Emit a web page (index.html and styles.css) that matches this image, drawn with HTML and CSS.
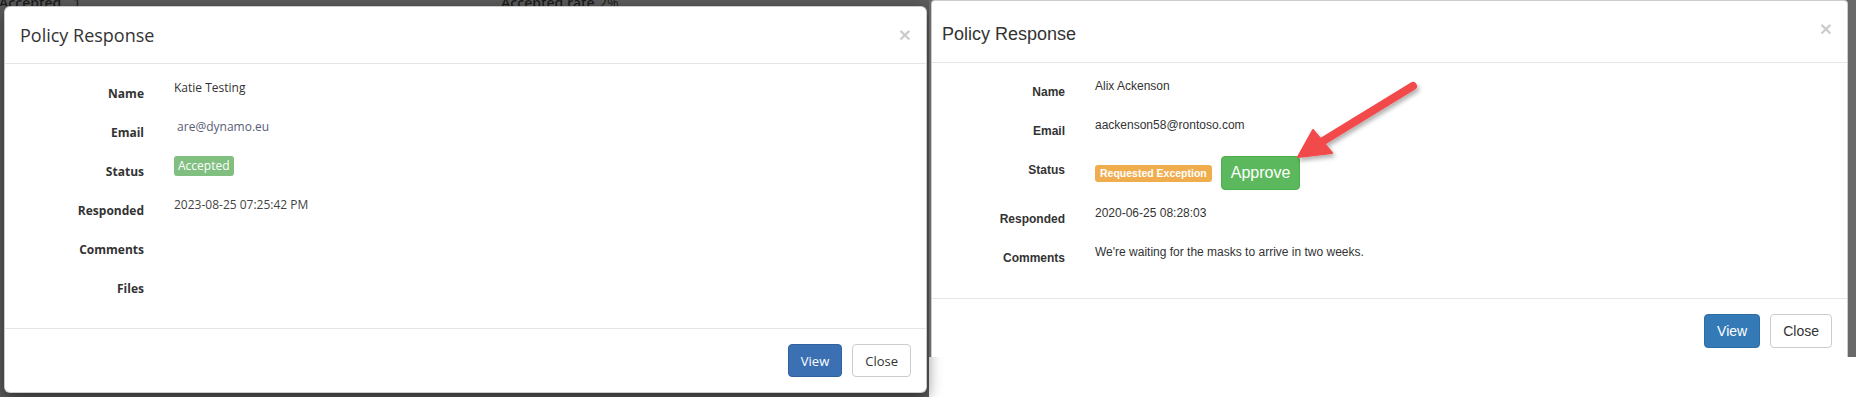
FILE: index.html
```html
<!DOCTYPE html>
<html lang="en">
  <head>
    <meta charset="UTF-8" />
    <meta name="viewport" content="width=device-width, initial-scale=1.0" />
    <title>Policy Response</title>
    <link rel="stylesheet" href="styles.css">
  </head>
  <body>
    <div class="shots">
      <!-- first capture: modal over the dimmed page -->
      <section class="shot shot_left">
        <div class="page_behind">
          <div class="behind_row">
            <span class="behind_label">Accepted</span><span class="behind_val">1</span>
            <span class="behind_label rate">Accepted rate</span><span class="behind_val">2%</span>
          </div>
        </div>
        <div class="modal modal_os">
          <div class="modal_header">
            <h4 class="modal_title">Policy Response</h4>
            <button class="close">&times;</button>
          </div>
          <div class="modal_body">
            <div class="form_row"><label>Name</label><div class="value">Katie Testing</div></div>
            <div class="form_row"><label>Email</label><div class="value email">&nbsp;are@dynamo.eu</div></div>
            <div class="form_row"><label>Status</label><div class="value"><span class="badge badge_ok">Accepted</span></div></div>
            <div class="form_row"><label>Responded</label><div class="value date">2023-08-25 07:25:42 PM</div></div>
            <div class="form_row"><label>Comments</label><div class="value"></div></div>
            <div class="form_row"><label>Files</label><div class="value"></div></div>
          </div>
          <div class="modal_footer">
            <button class="btn btn_primary">View</button>
            <button class="btn btn_default">Close</button>
          </div>
        </div>
      </section>

      <!-- second capture: approve flow, with the pointer arrow -->
      <section class="shot shot_right">
        <div class="capture">
          <div class="modal modal_arial">
            <div class="modal_header">
              <h4 class="modal_title">Policy Response</h4>
              <button class="close">&times;</button>
            </div>
            <div class="modal_body">
              <div class="form_row"><label>Name</label><div class="value">Alix Ackenson</div></div>
              <div class="form_row"><label>Email</label><div class="value">aackenson58@rontoso.com</div></div>
              <div class="form_row"><label>Status</label>
                <div class="value status">
                  <span class="badge badge_warn">Requested Exception</span>
                  <button class="btn_approve">Approve</button>
                </div>
              </div>
              <div class="form_row"><label>Responded</label><div class="value">2020-06-25 08:28:03</div></div>
              <div class="form_row"><label>Comments</label><div class="value">We're waiting for the masks to arrive in two weeks.</div></div>
            </div>
            <div class="modal_footer">
              <button class="btn btn_primary">View</button>
              <button class="btn btn_default">Close</button>
            </div>
          </div>
        </div>
        <svg class="arrow" width="160" height="110" viewBox="0 0 160 110">
          <defs>
            <filter id="arrowShadow" x="-20%" y="-20%" width="150%" height="150%">
              <feDropShadow dx="2" dy="3" stdDeviation="2" flood-color="#000" flood-opacity="0.3" />
            </filter>
          </defs>
          <g filter="url(#arrowShadow)" transform="translate(-360 -76)">
            <line x1="484" y1="86" x2="386" y2="146" stroke="#f24a4c" stroke-width="8" stroke-linecap="round" />
            <polygon points="369,157 384,130 403,153" fill="#f24a4c" stroke="#f24a4c" stroke-width="2" stroke-linejoin="round" />
          </g>
        </svg>
      </section>
    </div>
  </body>
</html>
```

FILE: styles.css
```css
* {
  margin: 0;
  padding: 0;
  box-sizing: border-box;
}
body {
  width: 1856px;
  height: 397px;
  overflow: hidden;
  background-color: #fff;
  color: #333;
}
.shots {
  display: flex;
  height: 397px;
}
.shot {
  position: relative;
  height: 397px;
}

/* ---------- left capture ---------- */
.shot_left {
  width: 929px;
  background-color: #5c5c5c;
  display: flex;
  flex-direction: column;
  font-family: "Open Sans", "DejaVu Sans", sans-serif;
}
.page_behind {
  height: 6px;
  overflow: hidden;
  display: flex;
  align-items: flex-end;
}
.behind_row {
  display: flex;
  margin-bottom: -5px;
  font-size: 14px;
  font-weight: 600;
  line-height: 16px;
  color: #1c1c1c;
}
.behind_label {
  margin-left: -1px;
  width: 74px;
}
.behind_label.rate {
  margin-left: 420px;
  width: 98px;
}
.behind_val {
  font-weight: 400;
}
.modal {
  background-color: #fff;
  border: 1px solid rgba(0, 0, 0, 0.2);
  display: flex;
  flex-direction: column;
}
.modal_os {
  margin-left: 4px;
  width: 923px;
  height: 387px;
  border-radius: 6px;
  box-shadow: 0 5px 15px rgba(0, 0, 0, 0.5);
}
.modal_header {
  display: flex;
  justify-content: space-between;
  align-items: flex-start;
  padding: 15px;
  border-bottom: 1px solid #e5e5e5;
}
.modal_title {
  font-size: 18px;
  font-weight: 400;
  line-height: 26px;
  color: #333;
}
.close {
  border: 0;
  background: none;
  font-family: "Liberation Sans", Arial, sans-serif;
  font-size: 21px;
  font-weight: 700;
  line-height: 21px;
  margin-top: 2px;
  color: #000;
  opacity: 0.2;
}
.modal_body {
  flex: 1;
  padding: 15px;
}
.form_row {
  display: grid;
  grid-template-columns: 124px 1fr;
  column-gap: 30px;
  margin-bottom: 15px;
}
.form_row label {
  text-align: right;
  font-weight: 700;
  font-size: 12px;
  line-height: 17px;
  padding-top: 6px;
}
.value {
  min-height: 24px;
  font-size: 12px;
  line-height: 17px;
}
.modal_os .value.email {
  color: #576074;
}
.modal_os .value.date {
  color: #444;
}
.badge {
  display: inline-block;
  color: #fff;
  border-radius: 3px;
}
.badge_ok {
  background-color: #80bf7f;
  font-size: 12px;
  line-height: 20px;
  padding: 0 4px;
  margin-top: -1px;
}
.modal_footer {
  display: flex;
  justify-content: flex-end;
  gap: 10px;
  padding: 15px;
  border-top: 1px solid #e5e5e5;
}
.btn {
  font-family: inherit;
  height: 33px;
  padding: 0 12px;
  font-size: 13px;
  border-radius: 4px;
  border: 1px solid transparent;
}
.btn_primary {
  background-color: #3b70b3;
  border-color: #30609e;
  color: #fff;
}
.btn_default {
  background-color: #fff;
  border-color: #ccc;
  color: #333;
}

/* ---------- right capture ---------- */
.shot_right {
  width: 927px;
  font-family: "Liberation Sans", Arial, sans-serif;
}
.capture {
  height: 357px;
  overflow: hidden;
  background-color: #696969;
  padding: 0 8px 0 2px;
  display: flex;
}
.modal_arial {
  flex: 1;
  height: 380px;
  border-radius: 4px 4px 0 0;
}
.modal_arial .modal_header {
  padding: 20px 15px 15px 10px;
}
.modal_arial .close {
  margin-top: -3px;
}
.modal_arial .modal_body {
  flex: none;
}
.modal_arial .form_row {
  grid-template-columns: 118px 1fr;
  column-gap: 30px;
}
.modal_arial .value.status {
  display: flex;
  align-items: center;
  gap: 9px;
}
.badge_warn {
  background-color: #f0ad4e;
  font-size: 10.5px;
  font-weight: 700;
  line-height: 17px;
  padding: 0 5px;
}
.btn_approve {
  font-family: inherit;
  height: 34px;
  padding: 0 9px;
  font-size: 16px;
  color: #fff;
  background-color: #5cb85c;
  border: 1px solid #4cae4c;
  border-radius: 4px;
}
.modal_arial .btn {
  height: 34px;
  font-size: 14px;
}
.modal_arial .btn_primary {
  background-color: #337ab7;
  border-color: #2e6da4;
}
.arrow {
  position: absolute;
  left: 360px;
  top: 76px;
}
```
